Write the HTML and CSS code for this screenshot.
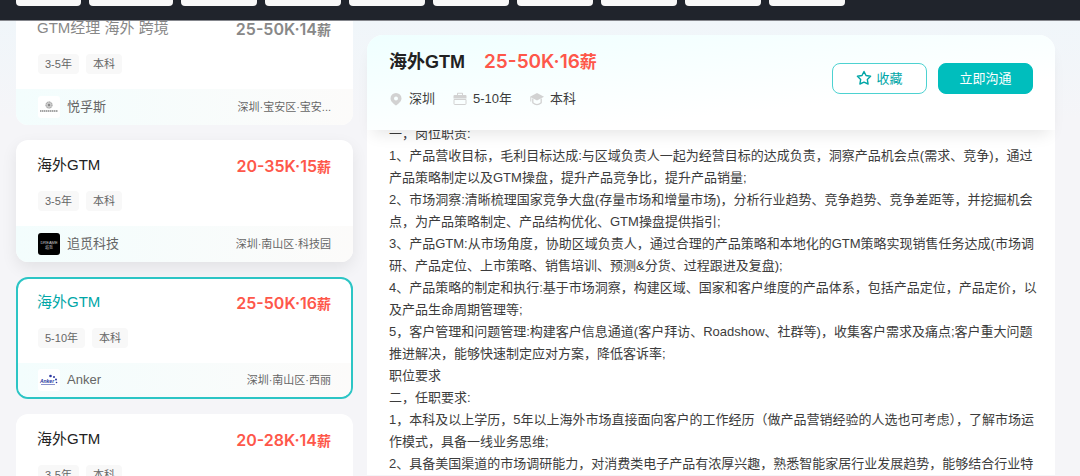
FILE: index.html
```html
<!DOCTYPE html>
<html lang="zh-CN">
<head>
  <meta charset="UTF-8">
  <meta name="viewport" content="width=device-width, initial-scale=1.0">
  <title>海外GTM</title>
  <link rel="stylesheet" href="styles.css">
</head>
<body>

  <header class="filter-bar">
    <div class="filter"></div>
    <div class="filter filter-wide"></div>
    <div class="filter"></div>
    <div class="filter"></div>
    <div class="filter"></div>
    <div class="filter"></div>
    <div class="filter"></div>
    <div class="filter"></div>
    <div class="filter"></div>
    <div class="filter"></div>
  </header>

  <main class="page">
    <ul class="job-list">
      <li class="job-card visited">
        <div class="job-top">
          <a class="job-name" href="#">GTM经理 海外 跨境</a>
          <span class="salary">25-50K·14<span class="unit">薪</span></span>
        </div>
        <div class="tags"><span>3-5年</span><span>本科</span></div>
        <div class="job-footer">
          <svg class="logo" viewBox="0 0 22 22">
            <rect width="22" height="22" rx="3" fill="#fff"/>
            <circle cx="11" cy="9" r="3.500" fill="#ccc"/>
            <circle cx="11" cy="9" r="3" fill="none" stroke="#999" stroke-dasharray="1 1"/>
            <circle cx="11" cy="9" r="1.200" fill="#888"/>
            <path d="M2 15h18" stroke="#888" stroke-width="1.600" stroke-dasharray="1.500 .5"/>
          </svg>
          <span class="company">悦孚斯</span>
          <span class="location">深圳·宝安区·宝安...</span>
        </div>
      </li>

      <li class="job-card hovered">
        <div class="job-top">
          <a class="job-name" href="#">海外GTM</a>
          <span class="salary">20-35K·15<span class="unit">薪</span></span>
        </div>
        <div class="tags"><span>3-5年</span><span>本科</span></div>
        <div class="job-footer">
          <svg class="logo" viewBox="0 0 22 22">
            <rect width="22" height="22" rx="3" fill="#000"/>
            <text x="11" y="11" class="logo-dreame">DREAME</text>
            <text x="11" y="16" class="logo-dreame">追觅</text>
          </svg>
          <span class="company">追觅科技</span>
          <span class="location">深圳·南山区·科技园</span>
        </div>
      </li>

      <li class="job-card active">
        <div class="job-top">
          <a class="job-name" href="#">海外GTM</a>
          <span class="salary">25-50K·16<span class="unit">薪</span></span>
        </div>
        <div class="tags"><span>5-10年</span><span>本科</span></div>
        <div class="job-footer">
          <svg class="logo" viewBox="0 0 22 22">
            <rect width="22" height="22" rx="3" fill="#fff"/>
            <text x="9" y="14" class="logo-anker">Anker</text>
            <path d="M3 15.500h14" stroke="#8a90cc"/>
            <g fill="#2a35a0">
              <circle cx="12.500" cy="7" r="1.300"/>
              <circle cx="16" cy="8" r="1"/>
              <circle cx="18" cy="10.500" r="1"/>
              <circle cx="18.500" cy="13.500" r=".8"/>
            </g>
          </svg>
          <span class="company">Anker</span>
          <span class="location">深圳·南山区·西丽</span>
        </div>
      </li>

      <li class="job-card">
        <div class="job-top">
          <a class="job-name" href="#">海外GTM</a>
          <span class="salary">20-28K·14<span class="unit">薪</span></span>
        </div>
        <div class="tags"><span>3-5年</span><span>本科</span></div>
        <div class="job-footer"></div>
      </li>
    </ul>

    <section class="detail">
      <div class="detail-header">
        <div class="detail-info">
          <div class="detail-title">
            <h1>海外GTM</h1>
            <span class="salary salary-large">25-50K·16<span class="unit">薪</span></span>
          </div>
          <ul class="meta">
            <li>
              <svg viewBox="0 0 14 14"><path fill="#d2d2d2" fill-rule="evenodd" d="M7 1a5.500 5.500 0 0 1 5.500 5.500C12.500 9.500 9 12 7 13.500 5 12 1.500 9.500 1.500 6.500A5.500 5.500 0 0 1 7 1zm0 3.500a2 2 0 1 0 0 4 2 2 0 0 0 0-4z"/></svg>
              深圳
            </li>
            <li>
              <svg viewBox="0 0 14 14"><path fill="#d2d2d2" d="M1.500 3H4V1.500Q4 .8 4.700.8h4.600q.7 0 .7.700V3h2.500q1 0 1 1v2.500H.5V4q0-1 1-1zM5 3h4V1.800H5z"/><path fill="none" stroke="#d2d2d2" d="M1 7.500v4.300q0 .7.700.7h10.600q.7 0 .7-.7V7.500z"/></svg>
              5-10年
            </li>
            <li>
              <svg viewBox="0 0 14 14"><path fill="#d2d2d2" d="M7 1l7 3.800-7 3.800L0 4.800z"/><path fill="none" stroke="#d2d2d2" stroke-width="1.300" d="M2.800 6.500v4.200Q7 14.500 11.200 10.700V6.500"/><path fill="none" stroke="#d2d2d2" d="M.8 5v4.500"/></svg>
              本科
            </li>
          </ul>
        </div>
        <div class="actions">
          <button class="btn btn-outline" type="button">
            <svg viewBox="0 -1 16 16"><path fill="none" stroke="#00a6a7" stroke-width="1.400" stroke-linejoin="round" d="M8 1.500l2 4 4.600.7-3.300 3.200.8 4.600L8 12.200 3.900 14l.8-4.600L1.400 6.200 6 5.500z"/></svg>
            收藏
          </button>
          <button class="btn btn-primary" type="button">立即沟通</button>
        </div>
      </div>

      <p class="description">
        一，岗位职责:<br>
        1、产品营收目标，毛利目标达成:与区域负责人一起为经营目标的达成负责，洞察产品机会点(需求、竞争)，通过<br>
        产品策略制定以及GTM操盘，提升产品竞争比，提升产品销量;<br>
        2、市场洞察:清晰梳理国家竞争大盘(存量市场和增量市场)，分析行业趋势、竞争趋势、竞争差距等，并挖掘机会<br>
        点，为产品策略制定、产品结构优化、GTM操盘提供指引;<br>
        3、产品GTM:从市场角度，协助区域负责人，通过合理的产品策略和本地化的GTM策略实现销售任务达成(市场调<br>
        研、产品定位、上市策略、销售培训、预测&amp;分货、过程跟进及复盘);<br>
        4、产品策略的制定和执行:基于市场洞察，构建区域、国家和客户维度的产品体系，包括产品定位，产品定价，以<br>
        及产品生命周期管理等;<br>
        5，客户管理和问题管理:构建客户信息通道(客户拜访、Roadshow、社群等)，收集客户需求及痛点;客户重大问题<br>
        推进解决，能够快速制定应对方案，降低客诉率;<br>
        职位要求<br>
        二，任职要求:<br>
        1，本科及以上学历，5年以上海外市场直接面向客户的工作经历（做产品营销经验的人选也可考虑），了解市场运<br>
        作模式，具备一线业务思维;<br>
        2、具备美国渠道的市场调研能力，对消费类电子产品有浓厚兴趣，熟悉智能家居行业发展趋势，能够结合行业特
      </p>
    </section>
  </main>

</body>
</html>
```

FILE: styles.css
```css
* {
  box-sizing: border-box;
  margin: 0;
  padding: 0;
}

body {
  height: 100vh;
  overflow: hidden;
  font-family: "Liberation Sans", "Noto Sans CJK SC", sans-serif;
  font-size: 13px;
  color: #3c3c3c;
  background: linear-gradient(#f0f6fa 20px, #f5f5f8 120px);
}

ul {
  list-style: none;
}

.filter-bar {
  position: relative;
  z-index: 10;
  display: flex;
  gap: 8px;
  height: 21px;
  padding: 0 16px;
  background-color: #20242c;
  border-bottom: 1px solid #85878d;
}

.filter {
  width: 76px;
  height: 6px;
  background-color: #f8f8f8;
  border-radius: 0 0 4px 4px;
}

.filter:first-child {
  width: 65px;
}

.filter-wide {
  width: 84px;
}

.page {
  display: flex;
  align-items: flex-start;
  gap: 14px;
  padding: 0 25px 0 16px;
}

/* job list */
.job-list {
  display: flex;
  flex-direction: column;
  gap: 15px;
  flex: 0 0 337px;
  margin-top: -18px;
}

.job-card {
  height: 122px;
  display: flex;
  flex-direction: column;
  background-color: #fff;
  border-radius: 12px;
  overflow: hidden;
}

.job-card.hovered {
  box-shadow: 0 6px 16px rgba(0, 0, 0, 0.08);
}

.job-card.active {
  border: 2px solid #2cc5c5;
}

.job-top {
  display: flex;
  justify-content: space-between;
  align-items: flex-start;
  height: 51px;
  padding: 14px 22px 0 21px;
}

.job-name {
  color: #222;
  font-size: 15px;
  line-height: 22px;
  text-decoration: none;
}

.salary {
  color: #fe574a;
  font-family: Inter, "Noto Sans CJK SC", sans-serif;
  font-size: 16px;
  font-weight: 600;
  line-height: 24px;
  white-space: nowrap;
}

.unit {
  font-size: 14px;
}

.visited .job-name,
.visited .salary {
  color: #888;
}

.tags {
  display: flex;
  gap: 7px;
  padding: 0 22px;
}

.tags span {
  padding: 0 7px;
  color: #666;
  font-size: 11px;
  line-height: 20px;
  background-color: #f8f8f8;
  border-radius: 4px;
}

.job-footer {
  display: flex;
  align-items: center;
  gap: 7px;
  height: 36px;
  margin-top: auto;
  padding: 0 22px;
  color: #666;
  line-height: 18px;
  background: linear-gradient(90deg, #f3fdfd, #fcfbfa);
}

/* the active card has a 2px border, so its inner padding is smaller */
.active .job-top {
  height: 49px;
  padding: 12px 20px 0 19px;
}

.active .job-name {
  color: #00a6a7;
}

.active .tags {
  padding: 0 20px;
}

.active .job-footer {
  height: 34px;
  padding: 0 20px;
}

.logo {
  width: 22px;
  height: 22px;
}

.logo-dreame {
  fill: #ccc;
  font-size: 4px;
  text-anchor: middle;
}

.logo-anker {
  fill: #2a35a0;
  font-size: 5px;
  font-weight: bold;
  font-style: italic;
  text-anchor: middle;
}

.location {
  margin-left: auto;
  font-size: 11px;
}

/* job detail */
.detail {
  flex: 1;
  min-width: 0;
  margin-top: 14px;
  background-color: #fff;
  border-radius: 16px 16px 0 0;
}

.detail-header {
  position: relative;
  display: flex;
  justify-content: space-between;
  align-items: flex-start;
  height: 95px;
  padding: 14px 22px 0;
  background: linear-gradient(174deg, #efffff, #fff 70%);
  border-radius: 16px 16px 0 0;
  box-shadow: 0 10px 16px -6px rgba(0, 0, 0, 0.1);
}

.detail-title {
  display: flex;
  align-items: center;
  gap: 19px;
  height: 26px;
}

.detail-title h1 {
  color: #222;
  font-size: 18px;
  line-height: 24px;
}

.salary-large {
  font-size: 19px;
}

.salary-large .unit {
  font-size: 17px;
}

.meta {
  display: flex;
  gap: 18px;
  margin-top: 14px;
  line-height: 20px;
}

.meta li {
  display: flex;
  align-items: center;
  gap: 6px;
}

.meta svg {
  width: 14px;
  height: 14px;
}

.actions {
  display: flex;
  gap: 11px;
  padding-top: 14px;
}

.btn {
  display: flex;
  justify-content: center;
  align-items: center;
  gap: 4px;
  width: 95px;
  height: 31px;
  padding-bottom: 3px;
  font-family: inherit;
  font-size: 13px;
  border: 1px solid #00bebd;
  border-radius: 8px;
  cursor: pointer;
}

.btn svg {
  width: 16px;
  height: 16px;
}

.btn-outline {
  color: #00a6a7;
  background-color: #fff;
  border-color: #4dd2d1;
}

.btn-primary {
  color: #fff;
  background-color: #00bebd;
}

.description {
  margin-top: -7px;
  padding-left: 22px;
  line-height: 22px;
  white-space: nowrap;
}
```
